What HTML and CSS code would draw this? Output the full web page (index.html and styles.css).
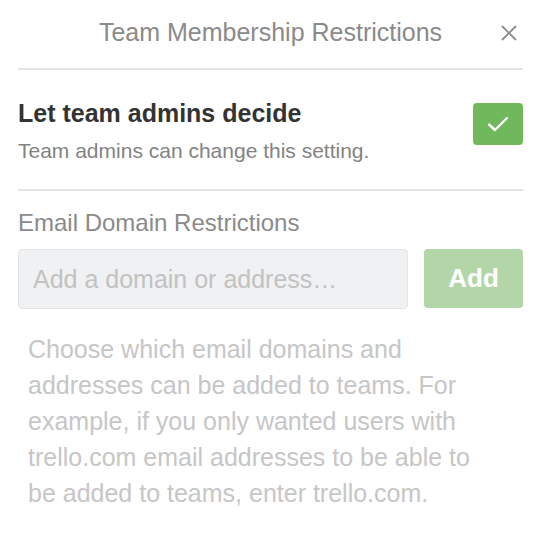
FILE: index.html
```html
<!DOCTYPE html>
<html>
<head>
<meta charset="utf-8">
<link rel="stylesheet" href="styles.css">
</head>
<body>
<div class="panel">
  <div class="header">
    <span class="title">Team Membership Restrictions</span>
    <span class="close">
      <svg width="16" height="16" viewBox="0 0 16 16"><path d="M1 1 L15 15 M15 1 L1 15" stroke="#8c8c8c" stroke-width="1.8" fill="none"/></svg>
    </span>
  </div>
  <div class="section setting">
    <div class="setting-text">
      <div class="setting-title">Let team admins decide</div>
      <div class="setting-desc">Team admins can change this setting.</div>
    </div>
    <div class="checkbox">
      <svg width="22" height="16" viewBox="0 0 22 16"><path d="M2 8.5 L8 14 L20 2" stroke="#fff" stroke-width="2.4" fill="none" stroke-linecap="round" stroke-linejoin="round"/></svg>
    </div>
  </div>
  <div class="domains">
    <div class="label">Email Domain Restrictions</div>
    <div class="add-row">
      <input class="domain-input" type="text" placeholder="Add a domain or address…">
      <button class="add-btn">Add</button>
    </div>
    <p class="help">Choose which email domains and addresses can be added to teams. For example, if you only wanted users with trello.com email addresses to be able to be added to teams, enter trello.com.</p>
  </div>
</div>
</body>
</html>
```
FILE: styles.css
```css
html, body {
  margin: 0;
  padding: 0;
  background: #fff;
  font-family: "Liberation Sans", Arial, sans-serif;
}
.panel {
  padding: 0 17px 0 18px;
}
.header {
  position: relative;
  height: 68px;
  display: flex;
  align-items: center;
  justify-content: center;
  border-bottom: 2px solid #e2e4e8;
}
.title {
  font-size: 25px;
  color: #8a8a8a;
  margin-top: -4px;
}
.close {
  position: absolute;
  right: 6px;
  top: 25px;
  display: flex;
}
.setting {
  display: flex;
  justify-content: space-between;
  align-items: flex-start;
  padding: 30px 0 26px;
  border-bottom: 2px solid #e2e4e8;
}
.setting-title {
  font-size: 25px;
  font-weight: bold;
  color: #333;
  line-height: 26px;
}
.setting-desc {
  margin-top: 13px;
  font-size: 21px;
  color: #838383;
  line-height: 24px;
}
.checkbox {
  width: 50px;
  height: 42px;
  margin-top: 3px;
  background: #70b85c;
  border-radius: 4px;
  display: flex;
  align-items: center;
  justify-content: center;
}
.domains {
  padding-top: 18px;
}
.label {
  font-size: 24px;
  color: #8a8a8a;
  line-height: 28px;
}
.add-row {
  display: flex;
  gap: 16px;
  margin-top: 12px;
}
.domain-input {
  flex: 1;
  height: 60px;
  box-sizing: border-box;
  margin: 0;
  border: 1px solid #e2e4e6;
  background: #f0f1f3;
  border-radius: 4px;
  padding: 0 14px;
  font-family: inherit;
  font-size: 25px;
  color: #333;
  outline: none;
}
.domain-input::placeholder {
  color: #c2c2c2;
}
.add-btn {
  width: 99px;
  height: 59px;
  border: none;
  border-radius: 4px;
  background: #b3d6a8;
  color: #fff;
  font-family: inherit;
  font-size: 26px;
  font-weight: bold;
  padding: 0;
}
.help {
  margin: 22px 0 0;
  padding: 0 36px 0 10px;
  font-size: 25px;
  line-height: 36px;
  color: #c6c6c6;
}
```
